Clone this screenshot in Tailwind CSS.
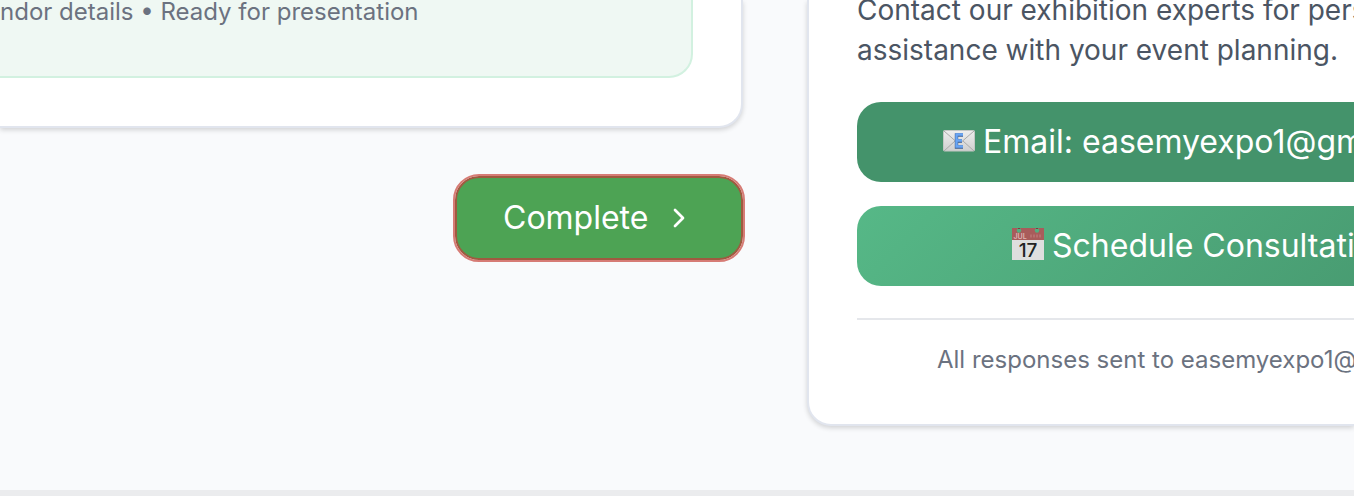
<!DOCTYPE html>
<html lang="en">
<head>
<meta charset="utf-8">
<meta name="viewport" content="width=device-width, initial-scale=1">
<title>Ease My Expo</title>
<script src="https://cdn.jsdelivr.net/npm/@tailwindcss/browser@4"></script>
</head>
<body class="flex min-h-screen flex-col overflow-hidden bg-[#f9fafc] font-['Inter','Liberation_Sans',sans-serif]">
<main class="grid grid-cols-[minmax(0,743fr)_minmax(0,547fr)] items-start gap-16 pb-16">
  <div class="flex flex-col items-end gap-12">
    <section class="w-full rounded-br-3xl border-r-2 border-b-2 border-[#e1e5ee] bg-white pr-12 pb-12 shadow-[0_2px_5px_rgba(0,0,0,0.16)]">
      <div class="rounded-br-3xl border-r-2 border-b-2 border-[#d2f1e0] bg-[#eff8f3] pb-12">
        <p class="-mt-1 text-2xl leading-8 whitespace-nowrap text-[#6b7280]">ndor details • Ready for presentation</p>
      </div>
    </section>
    <button type="button" class="flex h-[84px] w-72 items-center justify-between rounded-3xl border-2 border-[#9f5a40] bg-[#4da354] pr-12 pl-[46px] text-[32px] leading-10 text-white outline-2 outline-[#d67b75]">
      Complete
      <svg class="h-8 w-8" viewBox="0 0 32 32" fill="none" stroke="currentColor" stroke-width="2.7" stroke-linecap="round" stroke-linejoin="round" aria-hidden="true"><path d="M14 8l8 8-8 8"/></svg>
    </button>
  </div>
  <aside class="rounded-bl-3xl border-b-2 border-l-2 border-[#e1e5ee] bg-white pb-12 pl-12 shadow-[0_2px_5px_rgba(0,0,0,0.16)]">
    <p class="-mt-2.5 text-[28px] leading-10 whitespace-nowrap text-[#4b5563]">Contact our exhibition experts for personalized<br>assistance with your event planning.</p>
    <div class="mt-8 flex flex-col gap-6 text-[32px] leading-10 whitespace-nowrap text-white">
      <a href="mailto:easemyexpo1@gmail.com" class="flex h-20 items-center gap-2 rounded-l-3xl bg-[#44936b] pl-[86px]">
        <svg class="h-8 w-8 shrink-0" viewBox="0 0 32 32" aria-hidden="true">
          <defs><linearGradient id="paper" x2="0" y2="1"><stop stop-color="#eee"/><stop offset="1" stop-color="#cfcfcf"/></linearGradient></defs>
          <rect x=".5" y="4.500" width="31" height="20.500" rx="1" fill="url(#paper)" stroke="#c3c7c4"/>
          <path d="M1 5l12 10.500q3 2 6 0L31 5M1 25l11-10M31 25L20 15" fill="none" stroke="#aaa" stroke-width="1"/>
          <path d="M20 9h-6.500v12H20M13.500 15H19" fill="none" stroke="#3c5f93" stroke-width="3.400"/>
          <path d="M20 8.500h-6.500v12H20M13.500 14.500H19" fill="none" stroke="#69a5f5" stroke-width="2.400"/>
        </svg>
        <span>Email: easemyexpo1@gmail.com</span>
      </a>
      <button type="button" class="flex h-20 items-center gap-2 rounded-l-3xl bg-linear-135 from-[#56b887] to-[#44936b] to-135% pl-[155px]">
        <svg class="mb-1 h-8 w-8 shrink-0" viewBox="0 0 32 32" aria-hidden="true">
          <path d="M0 0h32v32H0z" fill="#dedede"/>
          <path d="M0 0h32v12H0z" fill="#a85c5b"/>
          <circle cx="7" cy="2.500" r="2.200" fill="#52af81"/><circle cx="25" cy="2.500" r="2.200" fill="#52af81"/>
          <path d="M6 1V0h2v1M24 1V0h2v1" fill="#7b3f3f"/>
          <text x="1.500" y="11" font-family="Inter" font-size="7" font-weight="600" fill="#dfb5b4">JUL</text>
          <path d="M18 8h12" stroke="#b66f6e" stroke-width="3" stroke-dasharray="2 1"/>
          <text x="16" y="28.500" text-anchor="middle" font-family="Inter" font-size="19" font-weight="500" fill="#222">17</text>
        </svg>
        <span>Schedule Consultation</span>
      </button>
    </div>
    <p class="mt-8 border-t-2 border-[#e5e7eb] pt-6 pl-20 text-2xl leading-8 whitespace-nowrap text-[#6b7280]">All responses sent to easemyexpo1@gmail.com</p>
  </aside>
</main>
<footer class="flex-1 bg-[#ebecee]"></footer>
</body>
</html>
